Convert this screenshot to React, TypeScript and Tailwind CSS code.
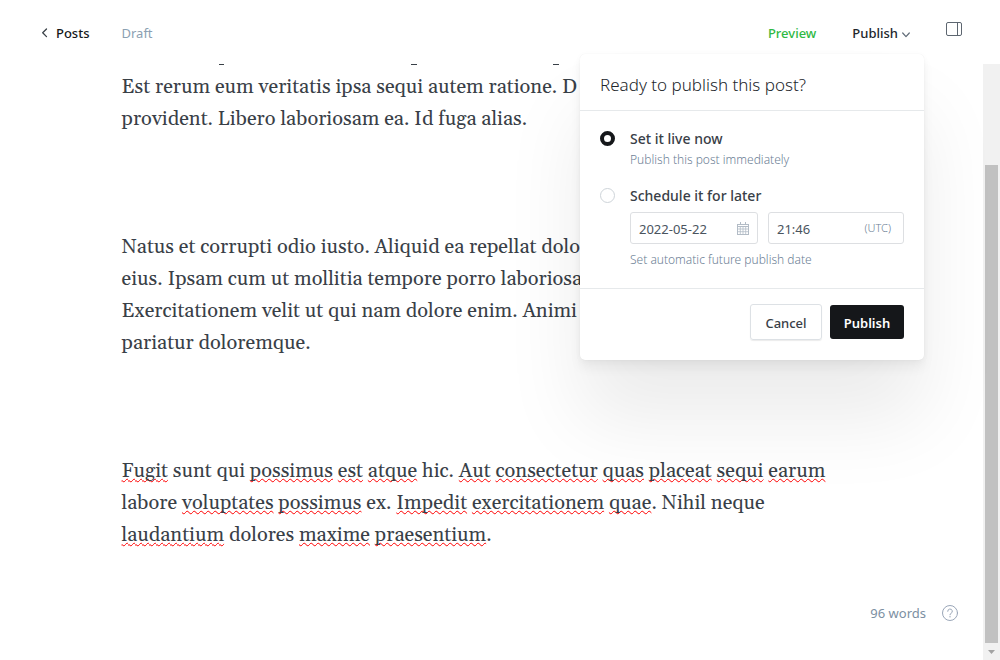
import type { ReactNode } from 'react'

function Misspelt({ children }: { children: ReactNode }) {
  return (
    <span className="underline decoration-[#f00] decoration-wavy decoration-1 underline-offset-1 [text-decoration-skip-ink:none]">
      {children}
    </span>
  )
}

function Header() {
  return (
    <header className="relative z-10 flex h-16 shrink-0 items-center justify-between bg-white pr-[38px] pl-[41px] text-[13px] leading-5">
      <div className="flex items-center gap-8 pt-0.5">
        <a href="#posts" className="flex items-center gap-[7px] font-medium text-[#15171a]">
          <svg width="8" height="10" viewBox="0 0 8 10" fill="none" stroke="#394047" strokeWidth="1.3" strokeLinecap="round" strokeLinejoin="round" aria-hidden="true">
            <path d="M5.5 1 1.7 4.8l3.8 3.8" />
          </svg>
          Posts
        </a>
        <span className="text-[#8ba0b2]">Draft</span>
      </div>
      <div className="flex items-center gap-9">
        <button type="button" className="pt-0.5 font-medium text-[#30b944]">Preview</button>
        <div className="relative pt-0.5">
          <button type="button" aria-expanded="true" className="flex items-center gap-1 font-medium text-[#22262b]">
            Publish
            <svg className="mt-1" width="8" height="6" viewBox="0 0 8 6" fill="none" stroke="#626d79" strokeWidth="1.2" strokeLinecap="round" strokeLinejoin="round" aria-hidden="true">
              <path d="M.7 1 4 4.6 7.3 1" />
            </svg>
          </button>
          <PublishMenu />
        </div>
        <button type="button" aria-label="Settings" className="pb-1.5">
          <svg width="16" height="14" viewBox="0 0 16 14" fill="none" stroke="#5d6670" aria-hidden="true">
            <rect x=".5" y=".5" width="15" height="13" rx="1.5" />
            <path d="M11.5.5v13" />
          </svg>
        </button>
      </div>
    </header>
  )
}

function CalendarIcon() {
  return (
    <svg className="shrink-0" width="12" height="13" viewBox="0 0 12 13" fill="none" stroke="#b3bcc6" aria-hidden="true">
      <rect x=".5" y="2.5" width="11" height="10" />
      <path d="M.5 4.5h11M3.5 0v3M8.5 0v3" />
      <path d="M.5 7h11M.5 9.7h11M3.3 5v7.5M6 5v7.5M8.7 5v7.5" strokeWidth=".8" />
    </svg>
  )
}

const radio =
  'mt-0.5 size-[15px] shrink-0 appearance-none rounded-full border border-[#ced4d9] bg-white checked:border-4 checked:border-[#15171a]'

function PublishMenu() {
  return (
    <form className="absolute top-full -right-3.5 mt-[11px] w-[344px] rounded-[5px] bg-white text-[#394047] shadow-[0_0_1px_rgba(0,0,0,0.08),0_1px_6px_rgba(0,0,0,0.03),0_8px_12px_rgba(0,0,0,0.05),0_60px_80px_rgba(0,0,0,0.08)]">
      <h2 className="border-b border-[#e6e9eb] px-5 pt-[19px] pb-[13px] text-[17px] leading-6 font-light text-[#22262b]">Ready to publish this post?</h2>
      <div className="flex flex-col gap-4 border-b border-[#e6e9eb] px-5 pt-[18px] pb-[18px]">
        <div className="flex gap-[15px]">
          <input id="now" type="radio" name="when" defaultChecked className={radio} />
          <div>
            <label htmlFor="now" className="block text-sm leading-5 font-medium">Set it live now</label>
            <p className="mt-px text-xs leading-5 font-light text-[#6c8095]">Publish this post immediately</p>
          </div>
        </div>
        <div className="flex gap-[15px]">
          <input id="later" type="radio" name="when" className={radio} />
          <div className="min-w-0 flex-1">
            <label htmlFor="later" className="block text-sm leading-5 font-medium">Schedule it for later</label>
            <div className="mt-1.5 flex gap-2.5">
              <div className="flex h-8 w-32 items-center rounded-[3px] border border-[#dddfe2] px-2">
                <input aria-label="Publish date" defaultValue="2022-05-22" className="w-full min-w-0 flex-1 pt-0.5 text-[13px] text-[#4a545e] outline-none" />
                <CalendarIcon />
              </div>
              <div className="flex h-8 min-w-0 flex-1 items-center rounded-[3px] border border-[#dddfe2] pr-3 pl-2">
                <input id="time" aria-label="Publish time" defaultValue="21:46" className="w-full min-w-0 flex-1 pt-0.5 text-[13px] text-[#4a545e] outline-none" />
                <label htmlFor="time" className="text-[11px] font-light text-[#6c8095]">(UTC)</label>
              </div>
            </div>
            <p className="mt-1.5 text-xs leading-5 font-light text-[#6c8095]">Set automatic future publish date</p>
          </div>
        </div>
      </div>
      <div className="flex items-center justify-end gap-2 px-5 pt-[15px] pb-5">
        <button type="button" className="h-9 w-[72px] rounded-[3px] border border-[#dde1e5] pt-0.5 text-[13px] font-medium shadow-[0_1px_1px_rgba(0,0,0,0.08)]">Cancel</button>
        <button type="button" className="h-[34px] w-[74px] rounded-[3px] bg-[#15171a] pt-0.5 text-[13px] font-semibold text-white">Publish</button>
      </div>
    </form>
  )
}

function Descenders() {
  return (
    <svg className="block h-[7px] w-full" height="7" aria-hidden="true" fill="#394047">
      <path d="M97 0h5v1h-5zM289 0h6v1h-6zM431 0h6v1h-6z" />
    </svg>
  )
}

function Editor() {
  return (
    <main className="flex min-h-0 flex-1">
      <div className="min-w-0 flex-1 overflow-hidden">
        <article className="mx-auto flex w-full max-w-[740px] flex-col font-['Gelasio','Liberation_Serif',serif] text-[20px] leading-8 whitespace-nowrap text-[#394047]">
          <Descenders />
          <p>
            Est rerum eum veritatis ipsa sequi autem ratione. D<br />
            provident. Libero laboriosam ea. Id fuga alias.
          </p>
          <p className="mt-24">
            Natus et corrupti odio iusto. Aliquid ea repellat dolo<br />
            eius. Ipsam cum ut mollitia tempore porro laboriosa<br />
            Exercitationem velit ut qui nam dolore enim. Animi<br />
            pariatur doloremque.
          </p>
          <p className="mt-24">
            <Misspelt>Fugit</Misspelt> sunt qui <Misspelt>possimus</Misspelt> <Misspelt>est</Misspelt> <Misspelt>atque</Misspelt> hic. <Misspelt>Aut</Misspelt> <Misspelt>consectetur</Misspelt> <Misspelt>quas</Misspelt> <Misspelt>placeat</Misspelt> <Misspelt>sequi</Misspelt> <Misspelt>earum</Misspelt><br />
            labore <Misspelt>voluptates</Misspelt> <Misspelt>possimus</Misspelt> ex. <Misspelt>Impedit</Misspelt> <Misspelt>exercitationem</Misspelt> <Misspelt>quae</Misspelt>. Nihil neque<br />
            <Misspelt>laudantium</Misspelt> dolores <Misspelt>maxime</Misspelt> <Misspelt>praesentium</Misspelt>.
          </p>
        </article>
      </div>
      <div aria-hidden="true" className="flex w-[17px] shrink-0 flex-col bg-[#f1f1f1] px-0.5 pt-[101px]">
        <div className="flex-1 bg-[#c1c1c1]" />
        <div className="flex h-[17px] items-center justify-center">
          <svg width="7" height="4" viewBox="0 0 7 4" fill="#a3a3a3">
            <path d="M0 0h7L3.500 4z" />
          </svg>
        </div>
      </div>
    </main>
  )
}

export default function App() {
  return (
    <div className="relative flex h-screen flex-col overflow-hidden bg-white font-['Noto_Sans',sans-serif]">
      <Header />
      <Editor />
      <footer className="absolute right-[42px] bottom-[37px] flex items-center gap-4 text-[13px] leading-5 text-[#7c8fa2]">
        <span>96 words</span>
        <button type="button" aria-label="Help">
          <svg width="16" height="16" viewBox="0 0 16 16" fill="none" stroke="#9aa6b8" strokeLinecap="round" aria-hidden="true">
            <circle cx="8" cy="8" r="7.5" />
            <path d="M5.700 6.300a2.300 2.300 0 1 1 3.300 2.100c-.7.3-1 .7-1 1.400" />
            <circle cx="8" cy="11.800" r=".7" fill="#9aa6b8" stroke="none" />
          </svg>
        </button>
      </footer>
    </div>
  )
}
